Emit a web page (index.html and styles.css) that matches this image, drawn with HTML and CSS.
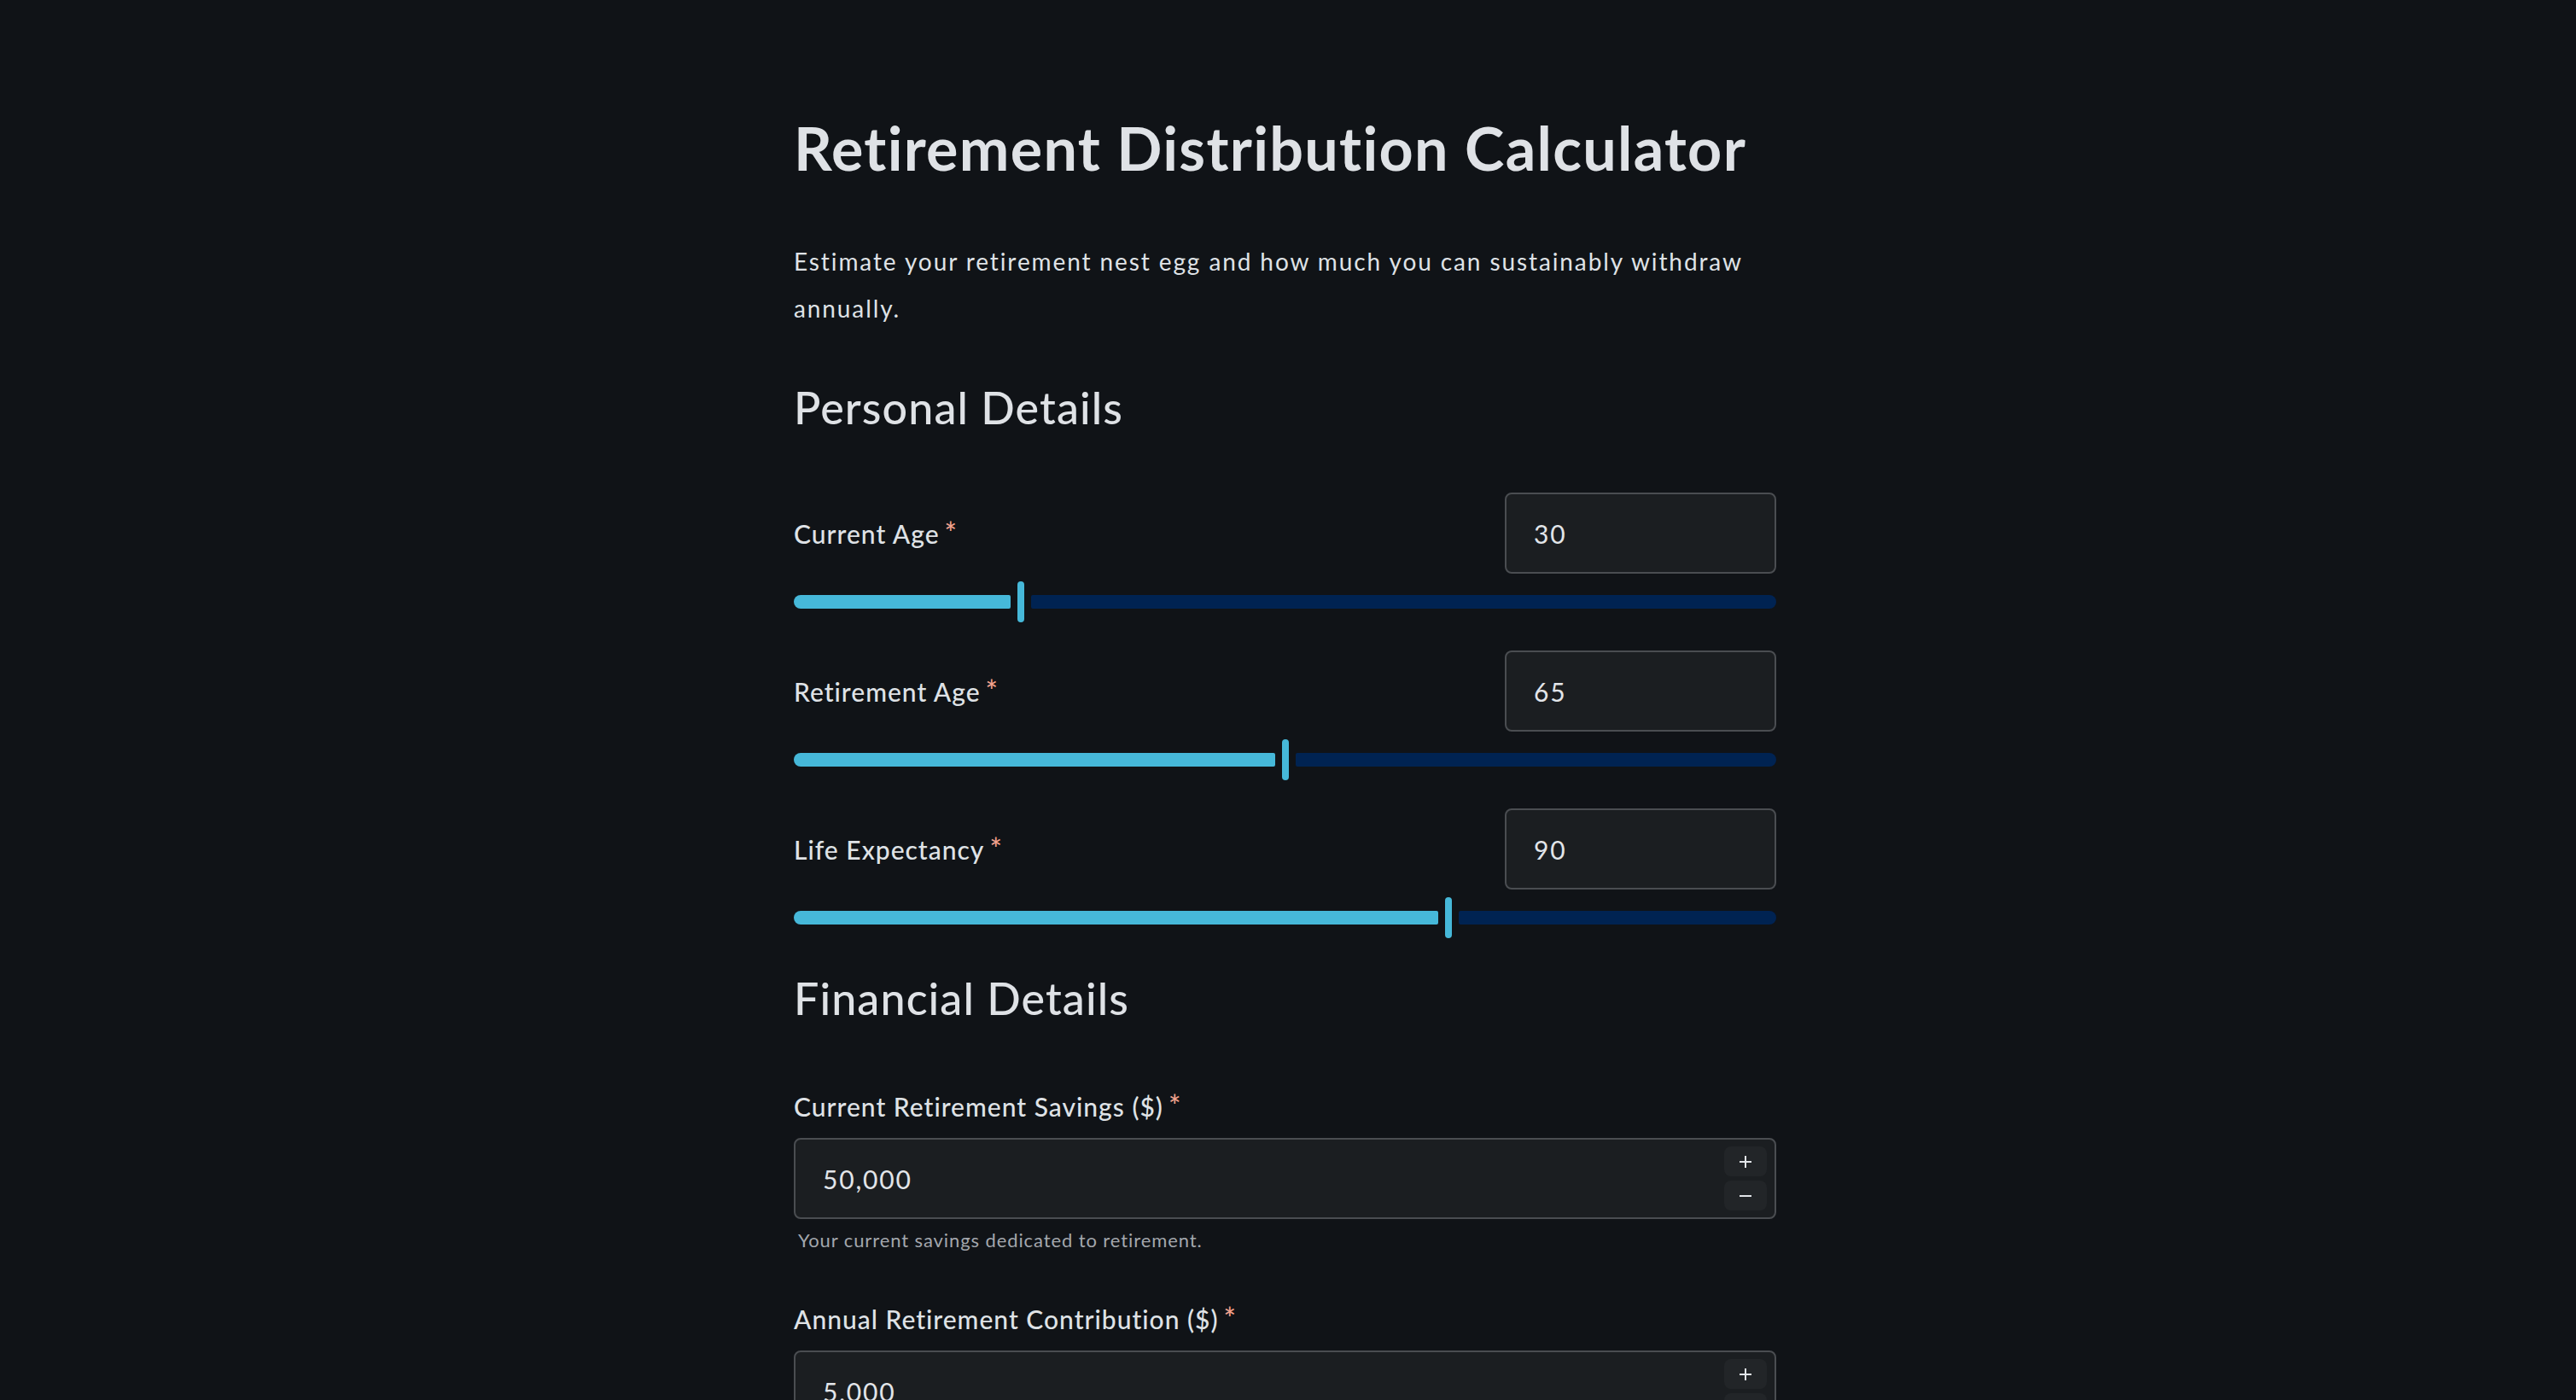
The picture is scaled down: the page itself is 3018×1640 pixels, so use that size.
FILE: index.html
```html
<!DOCTYPE html>
<html lang="en">
<head>
<meta charset="utf-8">
<title>Retirement Distribution Calculator</title>
<link rel="stylesheet" href="styles.css">
</head>
<body>
<main class="page">
  <h1 class="title">Retirement Distribution Calculator</h1>
  <p class="subtitle">Estimate your retirement nest egg and how much you can sustainably withdraw annually.</p>

  <h2 class="section">Personal Details</h2>

  <div class="slider-field">
    <div class="slider-head">
      <label class="label">Current Age<span class="req">*</span></label>
      <div class="box box-small"><span class="value">30</span></div>
    </div>
    <div class="slider">
      <div class="fill" style="width: calc(23.08% - 12px)"></div>
      <div class="thumb"></div>
      <div class="rest"></div>
    </div>
  </div>

  <div class="slider-field">
    <div class="slider-head">
      <label class="label">Retirement Age<span class="req">*</span></label>
      <div class="box box-small"><span class="value">65</span></div>
    </div>
    <div class="slider">
      <div class="fill" style="width: calc(50% - 12px)"></div>
      <div class="thumb"></div>
      <div class="rest"></div>
    </div>
  </div>

  <div class="slider-field">
    <div class="slider-head">
      <label class="label">Life Expectancy<span class="req">*</span></label>
      <div class="box box-small"><span class="value">90</span></div>
    </div>
    <div class="slider">
      <div class="fill" style="width: calc(66.67% - 12px)"></div>
      <div class="thumb"></div>
      <div class="rest"></div>
    </div>
  </div>

  <h2 class="section section-fin">Financial Details</h2>

  <div class="num-field">
    <label class="label">Current Retirement Savings ($)<span class="req">*</span></label>
    <div class="box box-wide">
      <span class="value">50,000</span>
      <div class="stepper">
        <button class="step" type="button" aria-label="Increase">
          <svg viewBox="0 0 16 16" width="16" height="16"><path d="M8 1v14M1 8h14" stroke="currentColor" stroke-width="2" fill="none"/></svg>
        </button>
        <button class="step" type="button" aria-label="Decrease">
          <svg viewBox="0 0 16 16" width="16" height="16"><path d="M1 8h14" stroke="currentColor" stroke-width="2" fill="none"/></svg>
        </button>
      </div>
    </div>
    <p class="help">Your current savings dedicated to retirement.</p>
  </div>

  <div class="num-field">
    <label class="label">Annual Retirement Contribution ($)<span class="req">*</span></label>
    <div class="box box-wide">
      <span class="value">5,000</span>
      <div class="stepper">
        <button class="step" type="button" aria-label="Increase">
          <svg viewBox="0 0 16 16" width="16" height="16"><path d="M8 1v14M1 8h14" stroke="currentColor" stroke-width="2" fill="none"/></svg>
        </button>
        <button class="step" type="button" aria-label="Decrease">
          <svg viewBox="0 0 16 16" width="16" height="16"><path d="M1 8h14" stroke="currentColor" stroke-width="2" fill="none"/></svg>
        </button>
      </div>
    </div>
  </div>
</main>
</body>
</html>
```

FILE: styles.css
```css
html, body {
  margin: 0;
  padding: 0;
  background: #101317;
}

body {
  font-family: Lato, "Noto Sans", sans-serif;
  color: #dfe2e6;
}

.page {
  max-width: 1158px;
  margin: 0 auto;
  padding: 131px 7px 120px 0;
  box-sizing: border-box;
}

.title {
  margin: 0;
  font-size: 70px;
  line-height: 84px;
  font-weight: 700;
  letter-spacing: 1.3px;
}

.subtitle {
  margin: 64px 0 0;
  font-size: 28px;
  line-height: 55px;
  font-weight: 400;
  letter-spacing: 1.9px;
}

.section {
  margin: 57px 0 0;
  font-size: 52px;
  line-height: 62px;
  font-weight: 500;
  letter-spacing: 1.1px;
}

.section-fin {
  margin-top: 39px;
}

.slider-field {
  display: flex;
  flex-direction: column;
  gap: 9px;
}

.section + .slider-field {
  margin-top: 69px;
}

.slider-field + .slider-field {
  margin-top: 33px;
}

.slider-head {
  display: flex;
  align-items: center;
  justify-content: space-between;
}

.label {
  display: block;
  font-size: 30px;
  line-height: 40px;
  font-weight: 500;
  letter-spacing: 1px;
}

.req {
  color: #f2a28d;
  margin-left: 6px;
  font-size: 34px;
  letter-spacing: 0;
}

.box {
  display: flex;
  align-items: center;
  box-sizing: border-box;
  height: 95px;
  background: #1b1e21;
  border: 2px solid #4a4d51;
  border-radius: 8px;
  padding: 0 9px 0 32px;
  font-size: 30px;
}

.box-small {
  width: 318px;
}

.box-wide {
  width: 100%;
  justify-content: space-between;
}

.value {
  color: #e2e5e9;
  letter-spacing: 1.8px;
}

.slider {
  display: flex;
  align-items: center;
  gap: 8px;
  height: 48px;
}

.fill {
  height: 16px;
  background: #46b8d9;
  border-radius: 8px 2px 2px 8px;
}

.thumb {
  width: 8px;
  height: 48px;
  background: #46b8d9;
  border-radius: 4px;
  flex: none;
}

.rest {
  flex: 1;
  height: 16px;
  background: #002352;
  border-radius: 2px 8px 8px 2px;
}

.section + .num-field {
  margin-top: 75px;
}

.num-field + .num-field {
  margin-top: 56px;
}

.num-field .box {
  margin-top: 17px;
}

.stepper {
  display: flex;
  flex-direction: column;
  gap: 5px;
}

.step {
  width: 50px;
  height: 35px;
  border: 0;
  padding: 0;
  border-radius: 8px;
  background: #222528;
  color: #e2e5e9;
  display: flex;
  align-items: center;
  justify-content: center;
}

.help {
  margin: 10px 0 0 5px;
  font-size: 22px;
  line-height: 30px;
  color: #a3a7ad;
  letter-spacing: 0.9px;
}
```
